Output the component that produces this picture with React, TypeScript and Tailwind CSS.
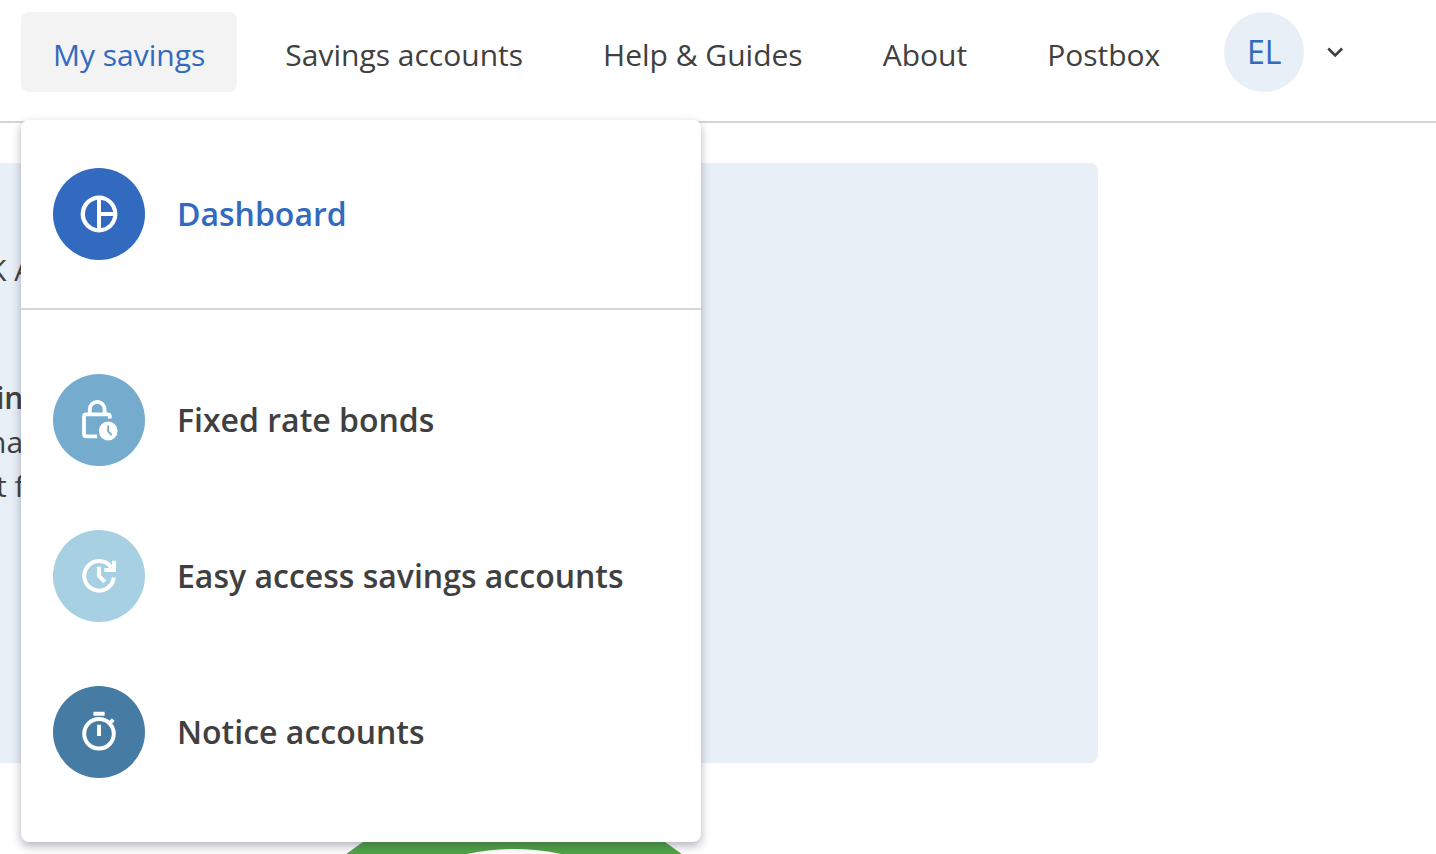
import { useState } from "react";
import type { ReactNode } from "react";

interface MenuItemProps {
  label: string;
  circle: string;
  active?: boolean;
  children: ReactNode;
}

function MenuItem({ label, circle, active, children }: MenuItemProps) {
  return (
    <a href="#" className="flex items-center gap-8">
      <span
        className={`flex size-[92px] shrink-0 items-center justify-center rounded-full text-white ${circle}`}
      >
        <svg viewBox="0 0 24 24" className="size-12" fill="currentColor" aria-hidden="true">
          {children}
        </svg>
      </span>
      <span
        className={`text-[32px] leading-[48px] font-semibold ${active ? "text-[#316abf]" : "text-[#404040]"}`}
      >
        {label}
      </span>
    </a>
  );
}

function SavingsMenu() {
  return (
    <div className="absolute top-[108px] left-0 z-10 w-[680px] rounded-lg bg-white shadow-[0_4px_10px_rgba(40,40,70,0.35)]">
      <div className="border-b-2 border-[#d5d5d5] px-8 py-12">
        <MenuItem label="Dashboard" circle="bg-[#316abf]" active>
          <path d="M12 2.8a9.2 9.2 0 1 0 0 18.4 9.2 9.2 0 0 0 0-18.4ZM11 4.9v14.2a7.2 7.2 0 0 1 0-14.2Zm2 0a7.2 7.2 0 0 1 6.1 6.1H13Zm0 8.1h6.1a7.2 7.2 0 0 1-6.1 6.1Z" />
        </MenuItem>
      </div>
      <div className="flex flex-col gap-16 px-8 py-16">
        <MenuItem label="Fixed rate bonds" circle="bg-[#75acce]">
          <path
            d="M11.1 20.2H5.6a1.1 1.1 0 0 1-1.1-1.1V10.3a1.1 1.1 0 0 1 1.1-1.1h10.7a1.1 1.1 0 0 1 1.1 1.1v1M7.4 9.2V6.6a3.7 3.7 0 0 1 7.4 0v2.6"
            fill="none"
            stroke="currentColor"
            strokeWidth="1.9"
          />
          <path
            fillRule="evenodd"
            d="M16.6 12.8a4.7 4.7 0 1 0 0 9.4 4.7 4.7 0 0 0 0-9.4Zm-.5 1.9h.9v2.8l1.7 1.7-.7.7-1.9-2Z"
          />
        </MenuItem>
        <MenuItem label="Easy access savings accounts" circle="bg-[#a7d0e2]">
          <path
            d="M19.4 12.8a7.4 7.4 0 1 1-1.2-5"
            fill="none"
            stroke="currentColor"
            strokeWidth="2"
          />
          <path
            d="M19.5 4.4V9h-4.8M12 7.4V12l2.9 2.9"
            fill="none"
            stroke="currentColor"
            strokeWidth="2"
          />
        </MenuItem>
        <MenuItem label="Notice accounts" circle="bg-[#467ca3]">
          <path
            d="M9.2 2.9h5.6M12 8.4V14M17 7.9l2.1-2.1"
            fill="none"
            stroke="currentColor"
            strokeWidth="2"
          />
          <circle
            cx="12"
            cy="12.9"
            r="7.4"
            fill="none"
            stroke="currentColor"
            strokeWidth="2"
          />
        </MenuItem>
      </div>
    </div>
  );
}

const links = ["Savings accounts", "Help & Guides", "About", "Postbox"];

export default function App() {
  const [open, setOpen] = useState(true);

  return (
    <div className="h-screen overflow-hidden bg-white font-['Open_Sans',sans-serif] text-[#404040]">
      <header className="border-b-2 border-[#d5d5d5] pt-3 pb-[29px]">
        <nav className="relative ml-[21px] flex items-center gap-4 text-[30px] leading-10 whitespace-nowrap">
          <button
            type="button"
            aria-expanded={open}
            onClick={() => setOpen(!open)}
            className="h-20 rounded-lg bg-[#f3f3f3] px-8 pt-1.5 text-[#316abf]"
          >
            My savings
          </button>
          {links.map((link) => (
            <a key={link} href="#" className="px-8 pt-1.5">
              {link}
            </a>
          ))}
          <button type="button" aria-label="Account" className="ml-4 flex items-center gap-4">
            <span className="flex size-20 items-center justify-center rounded-full bg-[#e9eff7] text-[32px] text-[#316abf]">
              EL
            </span>
            <svg viewBox="0 0 24 24" className="size-8" aria-hidden="true">
              <path d="M6.2 9.4l5.2 5.2 5.2-5.2" fill="none" stroke="#404040" strokeWidth="2" />
            </svg>
          </button>
          {open && <SavingsMenu />}
        </nav>
      </header>

      <main className="pt-10">
        <section className="mr-[338px] h-[600px] overflow-hidden rounded-r-lg bg-[#e8eff7] pt-[85px] text-[30px] leading-11">
          <p className="-ml-3">K A</p>
          <div className="mt-[84px]">
            <p className="-ml-1 font-semibold">in</p>
            <p className="-ml-3">na</p>
            <p className="-ml-1">t f</p>
          </div>
        </section>
        <svg viewBox="0 0 550 550" className="mt-[34px] ml-[239px] size-[550px]" aria-hidden="true">
          <circle cx="275" cy="275" r="249" fill="none" stroke="#50a544" strokeWidth="52" />
        </svg>
      </main>
    </div>
  );
}
